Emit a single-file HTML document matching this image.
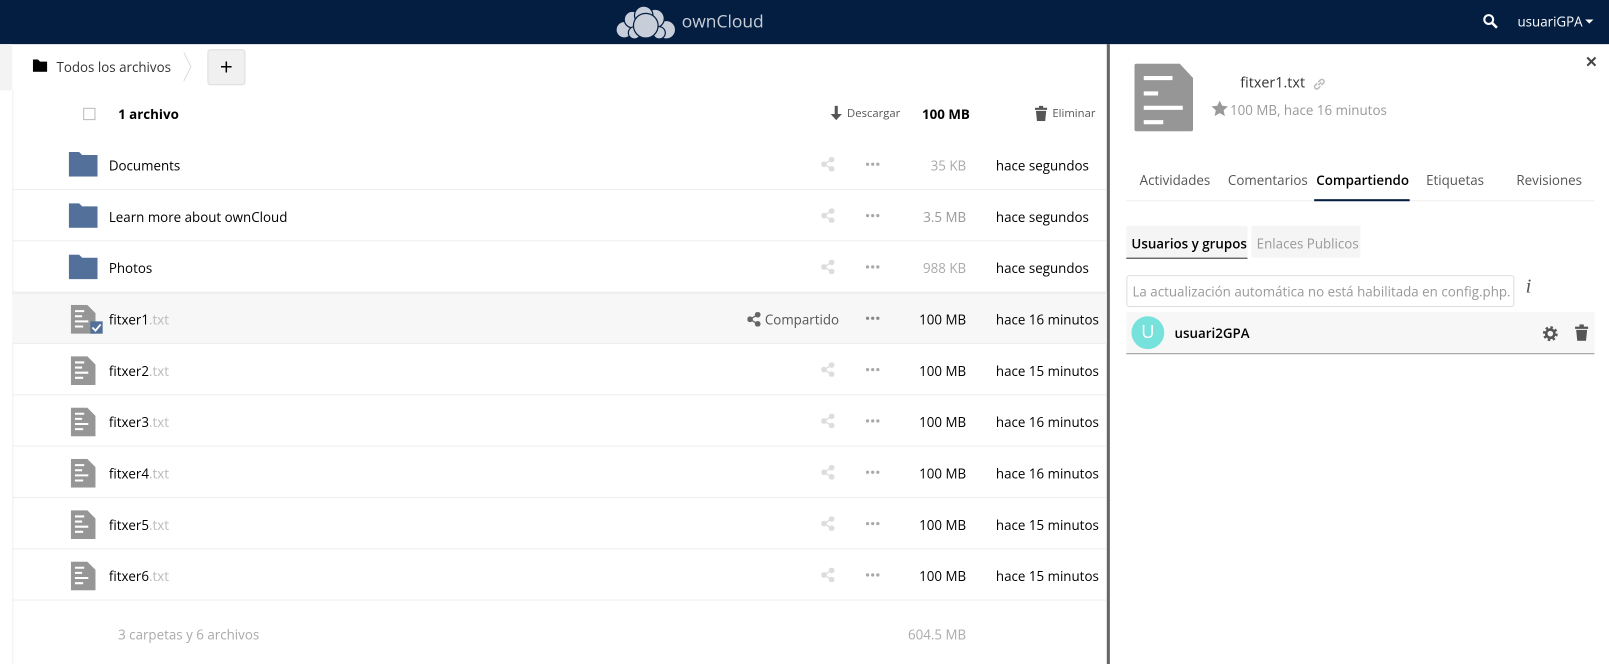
<!DOCTYPE html>
<html><head><meta charset="utf-8"><style>
*{box-sizing:border-box;margin:0;padding:0}
html,body{width:1609px;height:664px;overflow:hidden}
body{font-family:"Open Sans","DejaVu Sans","Liberation Sans",sans-serif;font-size:13px;color:#000;background:#fff;position:relative}
#w{position:absolute;left:0;top:0;width:1609px;height:664px;transform:scale(1.0267);transform-origin:0 0}
.top{position:absolute;left:0;top:0;width:1620px;height:43px;background:#041e42}
.abs{position:absolute;white-space:nowrap}
.row{position:absolute;left:12px;width:1066px;height:50px;border-bottom:1px solid #ededed}
.ic{position:absolute}
</style></head><body><div id="w">
<div class="top">
  <svg class="abs" style="left:598px;top:5px" width="62" height="34" viewBox="0 0 62 34">
    <g fill="#c8ced9" stroke="#041e42" stroke-width="1.2">
      <circle cx="10" cy="24" r="8"/><circle cx="51" cy="24" r="9"/><circle cx="18" cy="14" r="8"/><circle cx="40" cy="13" r="9"/><circle cx="29" cy="10" r="9"/><circle cx="20" cy="27" r="6"/><circle cx="44" cy="27" r="6"/><circle cx="31" cy="20" r="12"/>
    </g>
  </svg>
  <div class="abs" style="left:664px;top:9px;color:#c8ced9;font-size:17px">ownCloud</div>
  <svg class="abs" style="left:1444px;top:13px" width="16" height="16" viewBox="0 0 16 16"><circle cx="6" cy="6" r="4.3" fill="none" stroke="#fff" stroke-width="2"/><path d="M9 9l5 5" stroke="#fff" stroke-width="2.5"/></svg>
  <div class="abs" style="left:1478px;top:12px;color:#fff;font-size:13px">usuariGPA</div>
  <div class="abs" style="left:1544px;top:19px;border:4px solid transparent;border-top:4px solid #fff"></div>
</div>
<div class="abs" style="left:0;top:43px;width:12px;height:45px;background:#f3f3f3"></div>
<div class="abs" style="left:12px;top:88px;width:1px;height:576px;background:#eee"></div>
<div class="abs" style="left:1078px;top:43px;width:3px;height:621px;background:#666"></div>
<svg class="abs" style="left:32px;top:58px" width="14" height="12" viewBox="0 0 14 12"><path d="M0 0h5l2 2h7v10H0z" fill="#000"/></svg>
<div class="abs" style="left:55px;top:56px;color:#333">Todos los archivos</div>
<svg class="abs" style="left:178px;top:50px" width="10" height="30"><path d="M1 1l7 14-7 14" fill="none" stroke="#ddd"/></svg>
<div class="abs" style="left:202px;top:48px;width:37px;height:35px;background:#f0f0f0;border:1px solid #ddd;border-radius:3px;font-size:22px;text-align:center;line-height:32px">+</div>
<div class="abs" style="left:81px;top:105px;width:12px;height:12px;border:1px solid #bbb"></div>
<div class="abs" style="left:115px;top:102px;font-weight:bold">1 archivo</div>
<svg class="abs" style="left:808px;top:103px" width="13" height="15" viewBox="0 0 13 15"><path d="M5 0h3v8h4l-5.5 6L1 8h4z" fill="#555"/></svg>
<div class="abs" style="left:825px;top:103px;color:#555;font-size:11px">Descargar</div>
<div class="abs" style="left:898px;top:102px;font-weight:bold">100 MB</div>
<svg class="abs" style="left:1008px;top:103px" width="12" height="15" viewBox="0 0 12 15"><path d="M0 2h12v2H0zM4 0h4v2H4zM1 5h10l-1 10H2z" fill="#555"/></svg>
<div class="abs" style="left:1025px;top:103px;color:#555;font-size:11px">Eliminar</div>

<div class="row" style="top:135px"></div>
<div class="row" style="top:185px"></div>
<div class="row" style="top:235px"></div>
<div class="row" style="top:285px;background:#f7f7f7;border-top:1px solid #ededed"></div>
<div class="row" style="top:335px"></div>
<div class="row" style="top:385px"></div>
<div class="row" style="top:435px"></div>
<div class="row" style="top:485px"></div>
<div class="row" style="top:535px"></div>

<svg class="ic" style="left:67px;top:148px" width="28" height="24" viewBox="0 0 28 24"><path d="M0 0h10l3 3h15v21H0z" fill="#52709a"/></svg>
<svg class="ic" style="left:67px;top:198px" width="28" height="24" viewBox="0 0 28 24"><path d="M0 0h10l3 3h15v21H0z" fill="#52709a"/></svg>
<svg class="ic" style="left:67px;top:248px" width="28" height="24" viewBox="0 0 28 24"><path d="M0 0h10l3 3h15v21H0z" fill="#52709a"/></svg>
<div class="abs" style="left:106px;top:152px">Documents</div>
<div class="abs" style="left:106px;top:202px">Learn more about ownCloud</div>
<div class="abs" style="left:106px;top:252px">Photos</div>
<svg width="0" height="0" style="position:absolute"><defs><g id="f"><path d="M0 0h16l8 8v20H0z" fill="#969696"/><path d="M4 6h9M4 11h7M4 16h13M4 21h8" stroke="#fff" stroke-width="2"/></g></defs></svg>
<svg class="ic" style="left:69px;top:297px" width="32" height="30"><use href="#f"/><rect x="19" y="16" width="12" height="12" fill="#52709a"/><path d="M21 22l3 3 5-6" stroke="#fff" stroke-width="1.8" fill="none"/></svg>
<svg class="ic" style="left:69px;top:347px" width="24" height="28"><use href="#f"/></svg>
<svg class="ic" style="left:69px;top:397px" width="24" height="28"><use href="#f"/></svg>
<svg class="ic" style="left:69px;top:447px" width="24" height="28"><use href="#f"/></svg>
<svg class="ic" style="left:69px;top:497px" width="24" height="28"><use href="#f"/></svg>
<svg class="ic" style="left:69px;top:547px" width="24" height="28"><use href="#f"/></svg>
<div class="abs" style="left:106px;top:302px">fitxer1<span style="color:#bbb">.txt</span></div>
<div class="abs" style="left:106px;top:352px">fitxer2<span style="color:#bbb">.txt</span></div>
<div class="abs" style="left:106px;top:402px">fitxer3<span style="color:#bbb">.txt</span></div>
<div class="abs" style="left:106px;top:452px">fitxer4<span style="color:#bbb">.txt</span></div>
<div class="abs" style="left:106px;top:502px">fitxer5<span style="color:#bbb">.txt</span></div>
<div class="abs" style="left:106px;top:552px">fitxer6<span style="color:#bbb">.txt</span></div>

<svg width="0" height="0" style="position:absolute"><defs><g id="s"><circle cx="10" cy="2.5" r="2.3"/><circle cx="10" cy="11.5" r="2.3"/><circle cx="2.5" cy="7" r="2.3"/><path d="M10 2.5L2.5 7 10 11.5" stroke-width="1.3" fill="none"/></g><g id="d"><circle cx="2" cy="2" r="1.6"/><circle cx="7" cy="2" r="1.6"/><circle cx="12" cy="2" r="1.6"/></g></defs></svg>
<svg class="ic" style="left:800px;top:153px" width="13" height="14" fill="#ddd" stroke="#ddd"><use href="#s"/></svg>
<svg class="ic" style="left:800px;top:203px" width="13" height="14" fill="#ddd" stroke="#ddd"><use href="#s"/></svg>
<svg class="ic" style="left:800px;top:253px" width="13" height="14" fill="#ddd" stroke="#ddd"><use href="#s"/></svg>
<svg class="ic" style="left:728px;top:304px" width="13" height="14" fill="#666" stroke="#666"><use href="#s"/></svg>
<div class="abs" style="left:745px;top:302px;color:#555">Compartido</div>
<svg class="ic" style="left:800px;top:353px" width="13" height="14" fill="#ddd" stroke="#ddd"><use href="#s"/></svg>
<svg class="ic" style="left:800px;top:403px" width="13" height="14" fill="#ddd" stroke="#ddd"><use href="#s"/></svg>
<svg class="ic" style="left:800px;top:453px" width="13" height="14" fill="#ddd" stroke="#ddd"><use href="#s"/></svg>
<svg class="ic" style="left:800px;top:503px" width="13" height="14" fill="#ddd" stroke="#ddd"><use href="#s"/></svg>
<svg class="ic" style="left:800px;top:553px" width="13" height="14" fill="#ddd" stroke="#ddd"><use href="#s"/></svg>
<svg class="ic" style="left:843px;top:158px" width="14" height="4" fill="#aaa"><use href="#d"/></svg>
<svg class="ic" style="left:843px;top:208px" width="14" height="4" fill="#aaa"><use href="#d"/></svg>
<svg class="ic" style="left:843px;top:258px" width="14" height="4" fill="#aaa"><use href="#d"/></svg>
<svg class="ic" style="left:843px;top:308px" width="14" height="4" fill="#888"><use href="#d"/></svg>
<svg class="ic" style="left:843px;top:358px" width="14" height="4" fill="#aaa"><use href="#d"/></svg>
<svg class="ic" style="left:843px;top:408px" width="14" height="4" fill="#aaa"><use href="#d"/></svg>
<svg class="ic" style="left:843px;top:458px" width="14" height="4" fill="#aaa"><use href="#d"/></svg>
<svg class="ic" style="left:843px;top:508px" width="14" height="4" fill="#aaa"><use href="#d"/></svg>
<svg class="ic" style="left:843px;top:558px" width="14" height="4" fill="#aaa"><use href="#d"/></svg>

<div class="abs" style="left:860px;width:81px;text-align:right;top:152px;color:#aaa">35 KB</div>
<div class="abs" style="left:860px;width:81px;text-align:right;top:202px;color:#999">3.5 MB</div>
<div class="abs" style="left:860px;width:81px;text-align:right;top:252px;color:#aaa">988 KB</div>
<div class="abs" style="left:860px;width:81px;text-align:right;top:302px">100 MB</div>
<div class="abs" style="left:860px;width:81px;text-align:right;top:352px">100 MB</div>
<div class="abs" style="left:860px;width:81px;text-align:right;top:402px">100 MB</div>
<div class="abs" style="left:860px;width:81px;text-align:right;top:452px">100 MB</div>
<div class="abs" style="left:860px;width:81px;text-align:right;top:502px">100 MB</div>
<div class="abs" style="left:860px;width:81px;text-align:right;top:552px">100 MB</div>
<div class="abs" style="left:970px;top:152px">hace segundos</div>
<div class="abs" style="left:970px;top:202px">hace segundos</div>
<div class="abs" style="left:970px;top:252px">hace segundos</div>
<div class="abs" style="left:970px;top:302px">hace 16 minutos</div>
<div class="abs" style="left:970px;top:352px">hace 15 minutos</div>
<div class="abs" style="left:970px;top:402px">hace 16 minutos</div>
<div class="abs" style="left:970px;top:452px">hace 16 minutos</div>
<div class="abs" style="left:970px;top:502px">hace 15 minutos</div>
<div class="abs" style="left:970px;top:552px">hace 15 minutos</div>
<div class="abs" style="left:115px;top:609px;color:#aaa">3 carpetas y 6 archivos</div>
<div class="abs" style="left:860px;width:81px;text-align:right;top:609px;color:#aaa">604.5 MB</div>

<svg class="abs" style="left:1105px;top:62px" width="58" height="66" viewBox="0 0 58 66"><path d="M2 0h42l13 14v50a2 2 0 0 1-2 2H2a2 2 0 0 1-2-2V2a2 2 0 0 1 2-2z" fill="#969696"/><path d="M9 14h28M9 29h14M9 43h38M9 57h19" stroke="#fff" stroke-width="4"/></svg>
<div class="abs" style="left:1208px;top:71px;font-size:14px;color:#333">fitxer1.txt</div>
<svg class="abs" style="left:1278px;top:75px" width="14" height="14" viewBox="0 0 14 14"><path d="M6 8l3-3M5 6l-2 2a2 2 0 0 0 3 3l2-2M9 8l2-2a2 2 0 0 0-3-3L6 5" stroke="#bbb" stroke-width="1.5" fill="none"/></svg>
<svg class="abs" style="left:1180px;top:98px" width="16" height="15" viewBox="0 0 16 15"><path d="M8 0l2.4 5 5.6.6-4.2 3.8 1.2 5.6L8 12.2 3 15l1.2-5.6L0 5.6 5.6 5z" fill="#999"/></svg>
<div class="abs" style="left:1198px;top:98px;color:#999">100 MB, hace 16 minutos</div>
<svg class="abs" style="left:1545px;top:55px" width="10" height="10" viewBox="0 0 10 10"><path d="M1 1l8 8M9 1l-8 8" stroke="#444" stroke-width="2"/></svg>
<div class="abs" style="left:1110px;top:166px;color:#555">Actividades</div>
<div class="abs" style="left:1196px;top:166px;color:#555">Comentarios</div>
<div class="abs" style="left:1282px;top:166px;color:#000;font-weight:600">Compartiendo</div>
<div class="abs" style="left:1389px;top:166px;color:#555">Etiquetas</div>
<div class="abs" style="left:1477px;top:166px;color:#555">Revisiones</div>
<div class="abs" style="left:1097px;top:195px;width:456px;height:1px;background:#eee"></div>
<div class="abs" style="left:1280px;top:194px;width:93px;height:2px;background:#041e42"></div>
<div class="abs" style="left:1097px;top:220px;width:118px;height:32px;background:#f5f5f5;border-bottom:1px solid #333;padding:8px 5px 0;font-weight:600;overflow:hidden">Usuarios y grupos</div>
<div class="abs" style="left:1219px;top:220px;width:106px;height:31px;background:#f5f5f5;padding:8px 5px 0;color:#999;overflow:hidden">Enlaces Publicos</div>
<div class="abs" style="left:1097px;top:268px;width:378px;height:31px;border:1px solid #ddd;border-radius:3px;padding:6px 5px;color:#999;overflow:hidden">La actualización automática no está habilitada en config.php. I</div>
<div class="abs" style="left:1486px;top:268px;font-style:italic;font-family:'Liberation Serif',serif;font-size:20px;color:#555">i</div>
<div class="abs" style="left:1097px;top:304px;width:456px;height:41px;background:#f7f7f7;border-bottom:1px solid #999"></div>
<div class="abs" style="left:1102px;top:308px;width:32px;height:32px;border-radius:50%;background:#77e2dc;color:#fff;font-size:18px;text-align:center;line-height:31px">U</div>
<div class="abs" style="left:1144px;top:315px;font-weight:600">usuari2GPA</div>
<svg class="abs" style="left:1502px;top:317px" width="16" height="16" viewBox="0 0 16 16"><circle cx="8" cy="8" r="5.5" fill="none" stroke="#555" stroke-width="3.5" stroke-dasharray="2.2 2.1"/><circle cx="8" cy="8" r="4" fill="none" stroke="#555" stroke-width="2.5"/></svg>
<svg class="abs" style="left:1534px;top:316px" width="13" height="16" viewBox="0 0 12 15"><path d="M0 2h12v2H0zM4 0h4v2H4zM1 5h10l-1 10H2z" fill="#555"/></svg>
</div></body></html>
